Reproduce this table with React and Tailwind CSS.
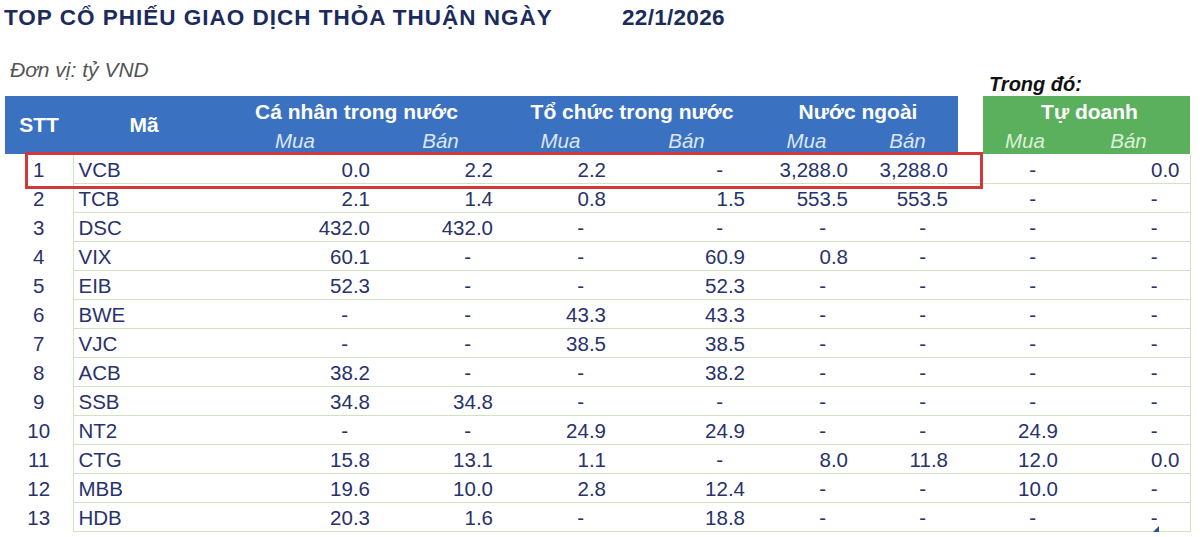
import React from "react";

const rows = [
  ["1", "VCB", "0.0", "2.2", "2.2", "-", "3,288.0", "3,288.0", "-", "0.0"],
  ["2", "TCB", "2.1", "1.4", "0.8", "1.5", "553.5", "553.5", "-", "-"],
  ["3", "DSC", "432.0", "432.0", "-", "-", "-", "-", "-", "-"],
  ["4", "VIX", "60.1", "-", "-", "60.9", "0.8", "-", "-", "-"],
  ["5", "EIB", "52.3", "-", "-", "52.3", "-", "-", "-", "-"],
  ["6", "BWE", "-", "-", "43.3", "43.3", "-", "-", "-", "-"],
  ["7", "VJC", "-", "-", "38.5", "38.5", "-", "-", "-", "-"],
  ["8", "ACB", "38.2", "-", "-", "38.2", "-", "-", "-", "-"],
  ["9", "SSB", "34.8", "34.8", "-", "-", "-", "-", "-", "-"],
  ["10", "NT2", "-", "-", "24.9", "24.9", "-", "-", "24.9", "-"],
  ["11", "CTG", "15.8", "13.1", "1.1", "-", "8.0", "11.8", "12.0", "0.0"],
  ["12", "MBB", "19.6", "10.0", "2.8", "12.4", "-", "-", "10.0", "-"],
  ["13", "HDB", "20.3", "1.6", "-", "18.8", "-", "-", "-", "-"],
];

// right padding for the 6 blue value columns
const bluePad = ["pr-[5px]", "pr-[5px]", "pr-[5px]", "pr-[5px]", "pr-[5px]", "pr-[10px]"];
const greenPad = ["pr-[5px]", "pr-[10px]"];

function Val({ v }) {
  if (v === "-") return <span className="pr-[22px]">-</span>;
  return v;
}

export default function App() {
  return (
    <div className="w-[1200px] h-[537px] bg-white overflow-hidden font-['Liberation_Sans',Arial,sans-serif]">
      {/* title */}
      <div className="h-[36px] flex items-center pl-[4px] text-[#1a2b5c] font-bold text-[22.5px]">
        <span className="w-[618px] shrink-0 tracking-[1px]">TOP CỔ PHIẾU GIAO DỊCH THỎA THUẬN NGÀY</span>
        <span className="tracking-[0.3px]">22/1/2026</span>
      </div>

      <div className="h-[60px] flex items-start pl-[5px]">
        <div className="w-[978px] shrink-0 pl-[5px] mt-[22px] leading-[24px] text-[21px] italic text-[#555]">
          Đơn vị: tỷ VND
        </div>
        <div className="pl-[6px] mt-[36px] leading-[24px] text-[20px] italic font-bold text-[#111]">
          Trong đó:
        </div>
      </div>

      <div className="relative ml-[5px] w-[1185px]">
        <table className="table-fixed border-collapse w-[1185px]">
          <colgroup>
            <col className="w-[68px]" />
            <col className="w-[142px]" />
            <col className="w-[160px]" />
            <col className="w-[123px]" />
            <col className="w-[113px]" />
            <col className="w-[139px]" />
            <col className="w-[103px]" />
            <col className="w-[105px]" />
            <col className="w-[25px]" />
            <col className="w-[80px]" />
            <col className="w-[127px]" />
          </colgroup>
          <thead>
            <tr className="h-[31px] text-white font-bold text-[21px]">
              <th rowSpan={2} className="bg-[#3b71c1] p-0 text-center">STT</th>
              <th rowSpan={2} className="bg-[#3b71c1] p-0 text-center">Mã</th>
              <th colSpan={2} className="bg-[#3b71c1] p-0 text-center leading-[24px]">Cá nhân trong nước</th>
              <th colSpan={2} className="bg-[#3b71c1] p-0 pl-[16px] text-center leading-[24px]">Tổ chức trong nước</th>
              <th colSpan={2} className="bg-[#3b71c1] p-0 pl-[8px] text-center leading-[24px]">Nước ngoài</th>
              <th className="bg-white p-0"></th>
              <th colSpan={2} className="bg-[#5bb05d] p-0 pl-[6px] text-center leading-[24px]">Tự doanh</th>
            </tr>
            <tr className="h-[27px] italic font-normal text-[20.5px] leading-[22px]">
              <th className="bg-[#3b71c1] p-0 font-normal text-[#dce6f7] text-center">Mua</th>
              <th className="bg-[#3b71c1] p-0 pl-[8px] font-normal text-[#dce6f7] text-center">Bán</th>
              <th className="bg-[#3b71c1] p-0 pl-[12px] font-normal text-[#dce6f7] text-center">Mua</th>
              <th className="bg-[#3b71c1] p-0 pl-[12px] font-normal text-[#dce6f7] text-center">Bán</th>
              <th className="bg-[#3b71c1] p-0 pl-[10px] font-normal text-[#dce6f7] text-center">Mua</th>
              <th className="bg-[#3b71c1] p-0 pl-[4px] font-normal text-[#dce6f7] text-center">Bán</th>
              <th className="bg-white p-0"></th>
              <th className="bg-[#5bb05d] p-0 pl-[4px] font-normal text-[#dbf0d6] text-center">Mua</th>
              <th className="bg-[#5bb05d] p-0 pl-[4px] font-normal text-[#dbf0d6] text-center">Bán</th>
            </tr>
          </thead>
          <tbody className="text-[20.5px] text-[#29326a]">
            {rows.map((r) => (
              <tr key={r[0]} className="h-[29px]">
                <td className="p-0 pt-[3px] text-center leading-[24px]">{r[0]}</td>
                <td className="p-0 pt-[3px] pl-[5px] leading-[24px] border-l border-b border-[#cfe3bf]">{r[1]}</td>
                {r.slice(2, 8).map((v, i) => (
                  <td key={i} className={`p-0 pt-[3px] text-right leading-[24px] border-b border-[#cfe3bf] ${bluePad[i]}`}>
                    <Val v={v} />
                  </td>
                ))}
                <td className="p-0 border-b border-[#cfe3bf]"></td>
                <td className={`p-0 pt-[3px] text-right leading-[24px] border-b border-[#cfe3bf] ${greenPad[0]}`}>
                  <Val v={r[8]} />
                </td>
                <td className={`p-0 pt-[3px] text-right leading-[24px] border-b border-r border-[#cfe3bf] ${greenPad[1]}`}>
                  <Val v={r[9]} />
                </td>
              </tr>
            ))}
          </tbody>
        </table>

        {/* highlight box around the first row */}
        <div className="absolute left-[20px] top-[56px] w-[958px] h-[37px] border-[3px] border-[#d4373a] pointer-events-none"></div>

        {/* resize grip */}
        <svg className="absolute left-[1148px] top-[430px]" width="6" height="6" viewBox="0 0 6 6">
          <path d="M6 0 L6 6 L0 6 Z" fill="#2f4f8a" />
        </svg>
      </div>
    </div>
  );
}
